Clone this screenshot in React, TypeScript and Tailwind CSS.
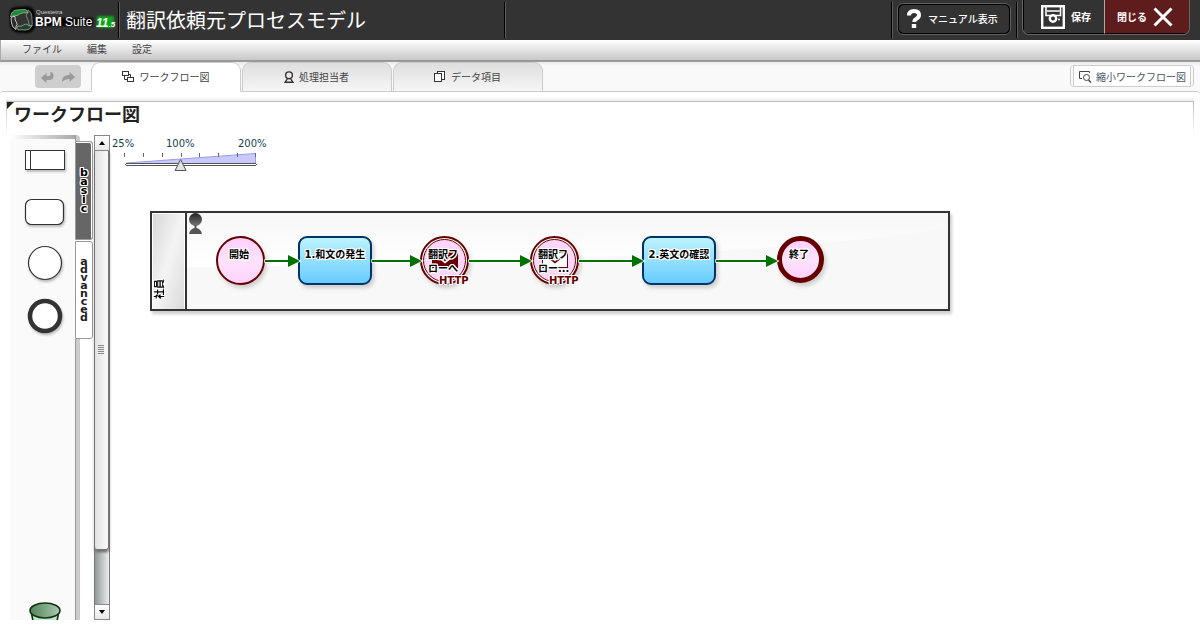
import { useState } from "react";

const jp = "font-['Noto_Sans_CJK_JP','Noto_Sans',sans-serif]";
const latin = "font-['DejaVu_Sans','Noto_Sans_CJK_JP',sans-serif]";
const halo =
  "[text-shadow:1px_0_0_#fff,-1px_0_0_#fff,0_1px_0_#fff,0_-1px_0_#fff,1px_1px_0_#fff,-1px_-1px_0_#fff,1px_-1px_0_#fff,-1px_1px_0_#fff]";

function Logo() {
  return (
    <svg width="109" height="32" viewBox="0 0 109 32" role="img" aria-label="Questetra BPM Suite 11.5">
      <defs>
        <filter id="glow" x="-30%" y="-30%" width="160%" height="160%">
          <feGaussianBlur stdDeviation="1.200" />
        </filter>
      </defs>
      <path d="M3 20 2.500 11Q3 5.500 8 5.500L19 5Q23 5.500 23.500 11L24 20Q23.500 26 18 26.500L9 26Q5 25.500 3 20Z" fill="none" stroke="#000" strokeWidth="5" filter="url(#glow)" />
      <g transform="translate(0 1)" strokeLinejoin="round">
        <path d="M1.500 12Q2.500 5.500 7 5L16 4.500Q19 5 18.500 8Q14 7 10.500 9Q8.500 11 7 10.500Q4.500 10.300 1.500 12Z" fill="#1d8a36" stroke="#a9c4ae" strokeWidth=".7" />
        <path d="M19 5Q22.500 6.500 22.800 11L23.300 19.500Q21.500 21.500 20 20Q20 15.500 18 13Q16.500 10 17.500 9.500Q20 8.500 19 5Z" fill="#2b332d" stroke="#999" strokeWidth=".8" />
        <path d="M23.300 20.500Q21 25 17 25L9 24.800Q7 23.500 8.500 21Q12.500 22 14.500 20Q17 17.500 19.500 20.500Q21 21.500 23.300 20.500Z" fill="#22402a" stroke="#9ab8a0" strokeWidth=".8" />
        <path d="M7 24.500Q3 22.500 2.500 18L2 13Q4 10.800 6 11.500Q5.500 15.500 7.500 17.500Q9 20 7 21Z" fill="#2b2b2b" stroke="#ddd" strokeWidth=".9" />
      </g>
      <rect x="28" y="14" width="56" height="8" fill="#000" filter="url(#glow)" />
      <text x="27" y="10" fill="#ccc" className="font-['Liberation_Sans',sans-serif] text-[6px]">Questetra</text>
      <text x="26" y="22" fill="#fff" className="font-['Liberation_Sans',sans-serif] text-[12px]">
        <tspan fontWeight="700">BPM</tspan> Suite
      </text>
      <rect x="88" y="12" width="17" height="12" fill="#0ea51c" filter="url(#glow)" />
      <text x="87" y="23" fill="#fff" className="font-['Liberation_Sans',sans-serif] text-[12px] font-bold italic">
        11<tspan className="text-[8px]">.5</tspan>
      </text>
    </svg>
  );
}

function Divider() {
  return <div className="my-[2px] w-[2px] shrink-0 self-stretch border-r border-l border-r-[#5c5c5c] border-l-black" />;
}

function Header() {
  return (
    <header className="flex h-10 shrink-0 bg-[#333] text-white">
      <div className="flex w-[118px] shrink-0 items-center pl-[9px]">
        <Logo />
      </div>
      <Divider />
      <h1 className="flex w-[384px] shrink-0 items-center truncate pl-[6px] text-[20px] leading-[30px]">翻訳依頼元プロセスモデル</h1>
      <Divider />
      <div className="flex-1" />
      <Divider />
      <button className="mr-[5px] ml-1 mt-[3px] flex h-8 w-[114px] items-center rounded-[6px] border border-[#606060] bg-black p-px text-[10px] font-medium">
        <span className="flex h-full w-full items-center gap-[7px] rounded-[5px] bg-[#333] pb-px pl-2">
          <svg width="14" height="20" viewBox="0 0 14 20" aria-hidden="true">
            <path d="M2 6.500Q2 2 7 2T12 6Q12 8.500 9.500 9.700Q7.300 10.700 7.300 13" fill="none" stroke="#fff" strokeWidth="4" />
            <rect x="4.800" y="15" width="4.400" height="4" fill="#fff" />
          </svg>
          マニュアル表示
        </span>
      </button>
      <Divider />
      <div className="mr-[10px] ml-1 flex h-[35px] overflow-hidden rounded-b-[7px] border border-t-0 border-[#666] text-[10px] font-semibold">
        <button className="flex w-[81px] items-center gap-[6px] border-b border-l border-black pl-[17px]">
          <svg width="24" height="24" viewBox="0 0 24 24" fill="none" stroke="#fff" aria-hidden="true">
            <rect x="1.200" y="1.200" width="21.600" height="21.600" strokeWidth="2.400" />
            <path d="M5 1V10.500H19.500V1M6 6H18.500" strokeWidth="1.600" />
            <circle cx="12" cy="13.500" r="3.200" fill="#333" strokeWidth="2.400" />
            <circle cx="18" cy="14.500" r="1" fill="#fff" stroke="none" />
          </svg>
          保存
        </button>
        <button className="flex w-[85px] items-center gap-[6px] border-b border-l border-b-black border-l-[#aaa] bg-[#5e1c1d] pl-[12px]">
          閉じる
          <svg width="20" height="20" viewBox="0 0 20 20" fill="none" stroke="#fff" strokeWidth="3" aria-hidden="true">
            <path d="M1.500 1.500 18.500 18.500M18.500 1.500 1.500 18.500" />
          </svg>
        </button>
      </div>
    </header>
  );
}

function MenuBar() {
  return (
    <nav className="flex h-[22px] shrink-0 items-center gap-[25px] border-b-2 border-l border-b-[#999] border-l-[#aaa] bg-linear-to-b from-white to-[#c8c8c8] pb-[2px] pl-[21px] text-[10px] leading-[14px] text-[#444]">
      <button>ファイル</button>
      <button>編集</button>
      <button>設定</button>
    </nav>
  );
}

function FlowIcon() {
  return (
    <svg width="13" height="12" viewBox="0 0 13 12" fill="none" stroke="#333" aria-hidden="true">
      <rect x=".5" y=".5" width="6" height="4" />
      <rect x="5.500" y="6.500" width="6" height="4" />
      <path d="M2.500 5V8.500H5M7 3.500H8.500V6" />
    </svg>
  );
}

function PersonIcon() {
  return (
    <svg width="10" height="12" viewBox="0 0 10 12" fill="none" stroke="#333" strokeWidth="1.400" aria-hidden="true">
      <circle cx="5" cy="4.300" r="3.400" />
      <path d="M3.500 7.500 1.200 11.200H8.800L6.500 7.500" />
    </svg>
  );
}

function PagesIcon() {
  return (
    <svg width="12" height="12" viewBox="0 0 12 12" fill="#fff" stroke="#333" aria-hidden="true">
      <rect x="3.500" y=".5" width="7" height="8" />
      <rect x=".5" y="2.500" width="7" height="8" />
    </svg>
  );
}

const tabs = [
  { label: "ワークフロー図", Icon: FlowIcon },
  { label: "処理担当者", Icon: PersonIcon },
  { label: "データ項目", Icon: PagesIcon },
];

function TabBar() {
  const [active, setActive] = useState(0);
  return (
    <div className="flex shrink-0 items-end bg-linear-to-b from-[#ebebeb] to-[#f9f9f9] to-15% pr-[6px] pl-[35px]">
      <div className="mr-[10px] mb-[3px] flex h-[23px] w-[46px] items-center justify-center gap-2 rounded-[4px] bg-[#cecece] text-[#999]">
        <button aria-label="元に戻す">
          <svg width="13" height="12" viewBox="0 0 13 12" aria-hidden="true">
            <path d="M0 7 5.500 2V5H8Q9.500 5 9.500 3.500V1Q12.500 1 12.500 5T8 9H5.500V12Z" fill="currentColor" />
          </svg>
        </button>
        <button aria-label="やり直す">
          <svg width="13" height="12" viewBox="0 0 13 12" aria-hidden="true">
            <path d="M13 6 7.500 1V4Q0 3.500 0 11Q2.500 8 7.500 8V11Z" fill="currentColor" />
          </svg>
        </button>
      </div>
      <div role="tablist" className="relative -mb-px flex gap-px">
        {tabs.map(({ label, Icon }, i) => (
          <button
            key={label}
            role="tab"
            aria-selected={active === i}
            onClick={() => setActive(i)}
            className={`flex h-[30px] w-[150px] items-center justify-center gap-[5px] rounded-t-[9px] border pr-px pb-px text-[10px] leading-[14px] text-[#444] ${
              active === i
                ? "border-[#ccc] border-b-white bg-white"
                : "border-[#ccc] bg-linear-to-b from-[#dedede] to-[#f6f6f6]"
            }`}
          >
            <Icon />
            {label}
          </button>
        ))}
      </div>
      <div className="flex-1" />
      <div className="mb-1 rounded-[4px] border-r border-l border-[#ccc] pr-[2px] pl-[2px]">
        <button className="flex h-[22px] items-center gap-1 border border-[#ccc] bg-white pr-1 pl-[5px] text-[10px] text-[#456]">
          <svg width="13" height="13" viewBox="0 0 13 13" fill="none" stroke="#444" aria-hidden="true">
            <path d="M3 8.500H.5V1.500H10.500V3" />
            <circle cx="7.500" cy="7.500" r="3" />
            <path d="M9.500 10 12 12.500" strokeWidth="1.500" />
          </svg>
          縮小ワークフロー図
        </button>
      </div>
    </div>
  );
}

function SectionTitle() {
  return (
    <div className="mr-[6px] ml-[6px] shrink-0 bg-linear-to-b from-white to-[#e4e4e4] to-15% pt-[4px]">
      <div className="bg-linear-to-b from-[#bbb] to-white px-px pt-px">
        <div className="flex h-[33px] items-start bg-white">
          <svg width="7" height="7" viewBox="0 0 7 7" aria-hidden="true">
            <path d="M0 0H7L0 7Z" fill="#222" />
          </svg>
          <h2 className="text-[18px] leading-[23px] font-bold text-[#222]">ワークフロー図</h2>
        </div>
      </div>
    </div>
  );
}

function Palette() {
  return (
    <div className="flex w-[65px] shrink-0 flex-col bg-[#fafafa]">
      <div className="h-1 shrink-0 bg-linear-to-r from-white to-[#aaa]" />
      <svg width="65" height="210" viewBox="0 0 65 210" fill="#fff" stroke="#333" className="shrink-0 drop-shadow-[1px_2px_1px_rgba(0,0,0,0.25)]" role="img" aria-label="図形">
        <rect x="15.500" y="11.500" width="39" height="19" />
        <path d="M20.500 11V31" />
        <rect x="15.500" y="60.500" width="38" height="25" rx="6" strokeWidth="1.200" />
        <circle cx="35" cy="124" r="16.500" strokeWidth="1.200" />
        <circle cx="35" cy="177" r="15" strokeWidth="4.500" />
      </svg>
      <div className="mt-auto h-[18px] shrink-0 overflow-hidden pl-[19px]">
        <svg width="32" height="36" viewBox="0 0 32 36" stroke="#123312" strokeWidth="1.600" role="img" aria-label="ごみ箱">
          <defs>
            <linearGradient id="bin">
              <stop stopColor="#4f8458" />
              <stop offset="1" stopColor="#adc9ae" />
            </linearGradient>
          </defs>
          <path d="M2 9 7 34H25L30 9Z" fill="#c4e8cc" />
          <ellipse cx="16" cy="8.500" rx="15" ry="7.500" fill="url(#bin)" />
        </svg>
      </div>
    </div>
  );
}

function PaletteTabs() {
  return (
    <div role="tablist" aria-orientation="vertical" className={`flex w-[19px] shrink-0 flex-col text-[11px] font-bold text-[#222] ${latin}`}>
      <div className="h-[6px] w-[5px] rounded-tr-[4px] border-l border-[#999] bg-[#ccc]" />
      <button role="tab" aria-selected="true" className="flex h-[99px] w-[18px] items-center justify-center rounded-r-[3px] border border-[#999] bg-[#666] shadow-[inset_-1px_1px_0_#fff]">
        <span className={`w-[9px] text-center leading-[9px] break-all text-black ${halo}`}>basic</span>
      </button>
      <button role="tab" aria-selected="false" className="mt-px flex h-[98px] w-[18px] items-center justify-center rounded-r-[3px] border border-[#999] bg-white">
        <span className="w-[9px] text-center leading-[8px] break-all">advanced</span>
      </button>
      <div className="w-[5px] flex-1 border-l border-[#999] bg-[#ccc]" />
    </div>
  );
}

function ScrollBar() {
  const button = "flex h-4 shrink-0 items-center justify-center border border-[#888] bg-linear-to-b from-white to-[#e8e8e8]";
  return (
    <div className="flex w-4 shrink-0 flex-col">
      <button aria-label="上へ" className={button}>
        <svg width="6" height="4" aria-hidden="true"><path d="M3 0 6 4H0Z" /></svg>
      </button>
      <div className="flex-1 border-x border-[#777] bg-linear-to-r from-[#909899] to-[#eee]">
        <div className="flex h-[88%] items-center rounded-b-[3px] border-r border-b border-[#777] bg-linear-to-r from-[#e2e2e2] to-[#fafafa] pl-[3px] shadow-[0_2px_3px_#666]">
          <svg width="6" height="10" stroke="#888" aria-hidden="true"><path d="M0 .5H6M0 2.500H6M0 4.500H6M0 6.500H6M0 8.500H6" /></svg>
        </div>
      </div>
      <button aria-label="下へ" className={button}>
        <svg width="6" height="4" aria-hidden="true"><path d="M3 4 6 0H0Z" /></svg>
      </button>
    </div>
  );
}

function ZoomSlider() {
  const [zoom, setZoom] = useState(100);
  const x = ((zoom - 25) * 132) / 175;
  return (
    <div className={`w-[158px] pt-[3px] text-[10px] leading-[12px] text-[#134250] ${latin}`}>
      <div className="flex">
        <span className="w-[54px]">25%</span>
        <span className="w-[72px]">100%</span>
        <span>200%</span>
      </div>
      <div className="relative ml-3 h-[22px] w-[138px]">
        <svg width="138" height="22" viewBox="0 0 138 22" aria-hidden="true">
          <path d="M2.500 13V14.500H131.500V3.500Z" fill="#c9c9ff" stroke="#9c9cf0" />
          <path d="M.5 3V7M19.500 3V7M38.500 3V7M57.500 3V7M75.500 3V7M94.500 3V7M113.500 3V7M131.500 3V7" stroke="#666" />
          <path d="M2 13.500H132M2 15.500H132M1.500 14V15M132.500 14V15" stroke="#555" />
          <path d="M2 14.500H132" stroke="#fff" />
          <path d={`M${x} 9.500 L${x - 5.500} 20.500 H${x + 5.500} Z`} fill="#e2e2e2" stroke="#555" strokeLinejoin="round" />
        </svg>
        <input
          type="range"
          aria-label="拡大率"
          min="25"
          max="200"
          step="25"
          value={zoom}
          onChange={(e) => setZoom(Number(e.target.value))}
          className="absolute inset-0 w-full opacity-0"
        />
      </div>
    </div>
  );
}

const nodeLabel = `text-[10px] font-semibold text-black ${halo} ${latin}`;
const nodeShadow = "shadow-[2px_3px_4px_rgba(0,0,0,0.18)]";

function Task({ label, place }: { label: string; place: string }) {
  return (
    <div className={`absolute top-[23px] h-[49px] w-[74px] rounded-[9px] border-2 border-[#003366] bg-linear-to-b from-[#bcf3ff] to-[#66ccff] pt-[10px] text-center leading-[14px] whitespace-nowrap ${nodeShadow} ${nodeLabel} ${place}`}>
      {label}
    </div>
  );
}

function HttpEvent({ lines, place, filled }: { lines: string[]; place: string; filled?: boolean }) {
  return (
    <div className={`absolute top-[23px] h-[49px] w-[49px] rounded-full border-2 border-[#660000] bg-white p-px ${nodeShadow} ${place}`}>
      <div className="h-full w-full rounded-full border border-[#660000] bg-[#ffd6fb]" />
      <svg width="28" height="18" viewBox="0 0 28 18" className="absolute top-[13px] left-[9px]" aria-hidden="true">
        <rect x="1.500" y="1.500" width="25" height="15" fill={filled ? "#660000" : "#fff"} stroke="#660000" />
        <path d="M2 2 14 11.500 26 2" fill="none" stroke={filled ? "#fff" : "#660000"} strokeWidth="1.600" />
      </svg>
      <div className={`absolute top-[10px] left-[6px] w-[36px] leading-[14px] whitespace-nowrap ${nodeLabel}`}>
        {lines.map((line) => (
          <div key={line}>{line}</div>
        ))}
      </div>
      <div className={`absolute top-[37px] left-[17px] text-[10px] leading-[12px] font-bold text-[#660000] ${halo} ${latin}`}>HTTP</div>
    </div>
  );
}

const flows = [
  [113, 148],
  [220, 270],
  [317, 380],
  [427, 492],
  [564, 626],
];

function Diagram() {
  return (
    <div className="flex h-[100px] w-[800px] border-2 border-[#333] bg-[#f8f8f8] shadow-[2px_3px_3px_rgba(0,0,0,0.2)]">
      <div className="flex w-[35px] shrink-0 items-end border-r-2 border-[#333] bg-white p-px pb-0">
        <div className="flex h-full w-full items-end bg-linear-to-br from-[#d8d8d8] via-[#f4f4f4] to-[#dadada] pb-[10px]">
          <span className={`rotate-180 [text-orientation:sideways] [writing-mode:vertical-rl] leading-[14px] ${nodeLabel}`}>社員</span>
        </div>
      </div>
      <div className="relative -ml-[35px] flex-1">
        <svg width="796" height="96" viewBox="0 0 796 96" className="absolute inset-0" aria-hidden="true">
          <defs>
            <linearGradient id="gloss" x2="0" y2="1">
              <stop stopColor="#f7f7f7" />
              <stop offset="1" stopColor="#fff" />
            </linearGradient>
            <linearGradient id="person" x2="0" y2="1">
              <stop stopColor="#222" />
              <stop offset="1" stopColor="#777" />
            </linearGradient>
          </defs>
          <path d="M35 0H796V15Q600 48 35 54Z" fill="url(#gloss)" />
          <circle cx="43.500" cy="6.500" r="6.500" fill="url(#person)" />
          <path d="M42.500 12H44.500V15Q49 16 50 21H37Q38 16 42.500 15Z" fill="#555" />
        </svg>
        <div className={`absolute top-[23px] left-[64px] h-[49px] w-[49px] rounded-full border-2 border-[#660000] bg-linear-to-b from-[#ffcffc] via-[#ffe2fd] to-[#ffd2fc] pt-[10px] pr-[3px] text-center leading-[14px] ${nodeShadow} ${nodeLabel}`}>
          開始
        </div>
        <Task label="1.和文の発生" place="left-[146px]" />
        <HttpEvent filled lines={["翻訳フ", "ローへ"]} place="left-[268px]" />
        <HttpEvent lines={["翻訳フ", "ロー..."]} place="left-[378px]" />
        <Task label="2.英文の確認" place="left-[490px]" />
        <div className={`absolute top-[23px] left-[625px] h-[47px] w-[47px] rounded-full border-5 border-[#660000] bg-linear-to-b from-[#ffcffc] via-[#ffe2fd] to-[#ffd2fc] pt-[7px] pr-[3px] text-center leading-[14px] ${nodeShadow} ${nodeLabel}`}>
          終了
        </div>
        <svg width="796" height="96" viewBox="0 0 796 96" className="absolute inset-0" aria-hidden="true">
          {flows.map(([from, to]) => (
            <g key={from} fill="#007000" stroke="#fff" strokeWidth="1.500" paintOrder="stroke">
              <path d={`M${from} 47H${to - 12}V42L${to} 48L${to - 12} 54V49H${from}Z`} />
            </g>
          ))}
        </svg>
      </div>
    </div>
  );
}

export default function App() {
  return (
    <div className={`flex min-h-screen flex-col bg-white pb-[10px] ${jp}`}>
      <Header />
      <MenuBar />
      <TabBar />
      <main className="flex flex-1 flex-col rounded-t-[4px] border-t border-[#ccc] pt-[5px]">
        <SectionTitle />
        <div className="flex flex-1 pl-[10px]">
          <Palette />
          <PaletteTabs />
          <ScrollBar />
          <section className="min-w-0 flex-1 pl-[2px]">
            <ZoomSlider />
            <div className="pt-[39px] pl-[38px]">
              <Diagram />
            </div>
          </section>
        </div>
      </main>
    </div>
  );
}
